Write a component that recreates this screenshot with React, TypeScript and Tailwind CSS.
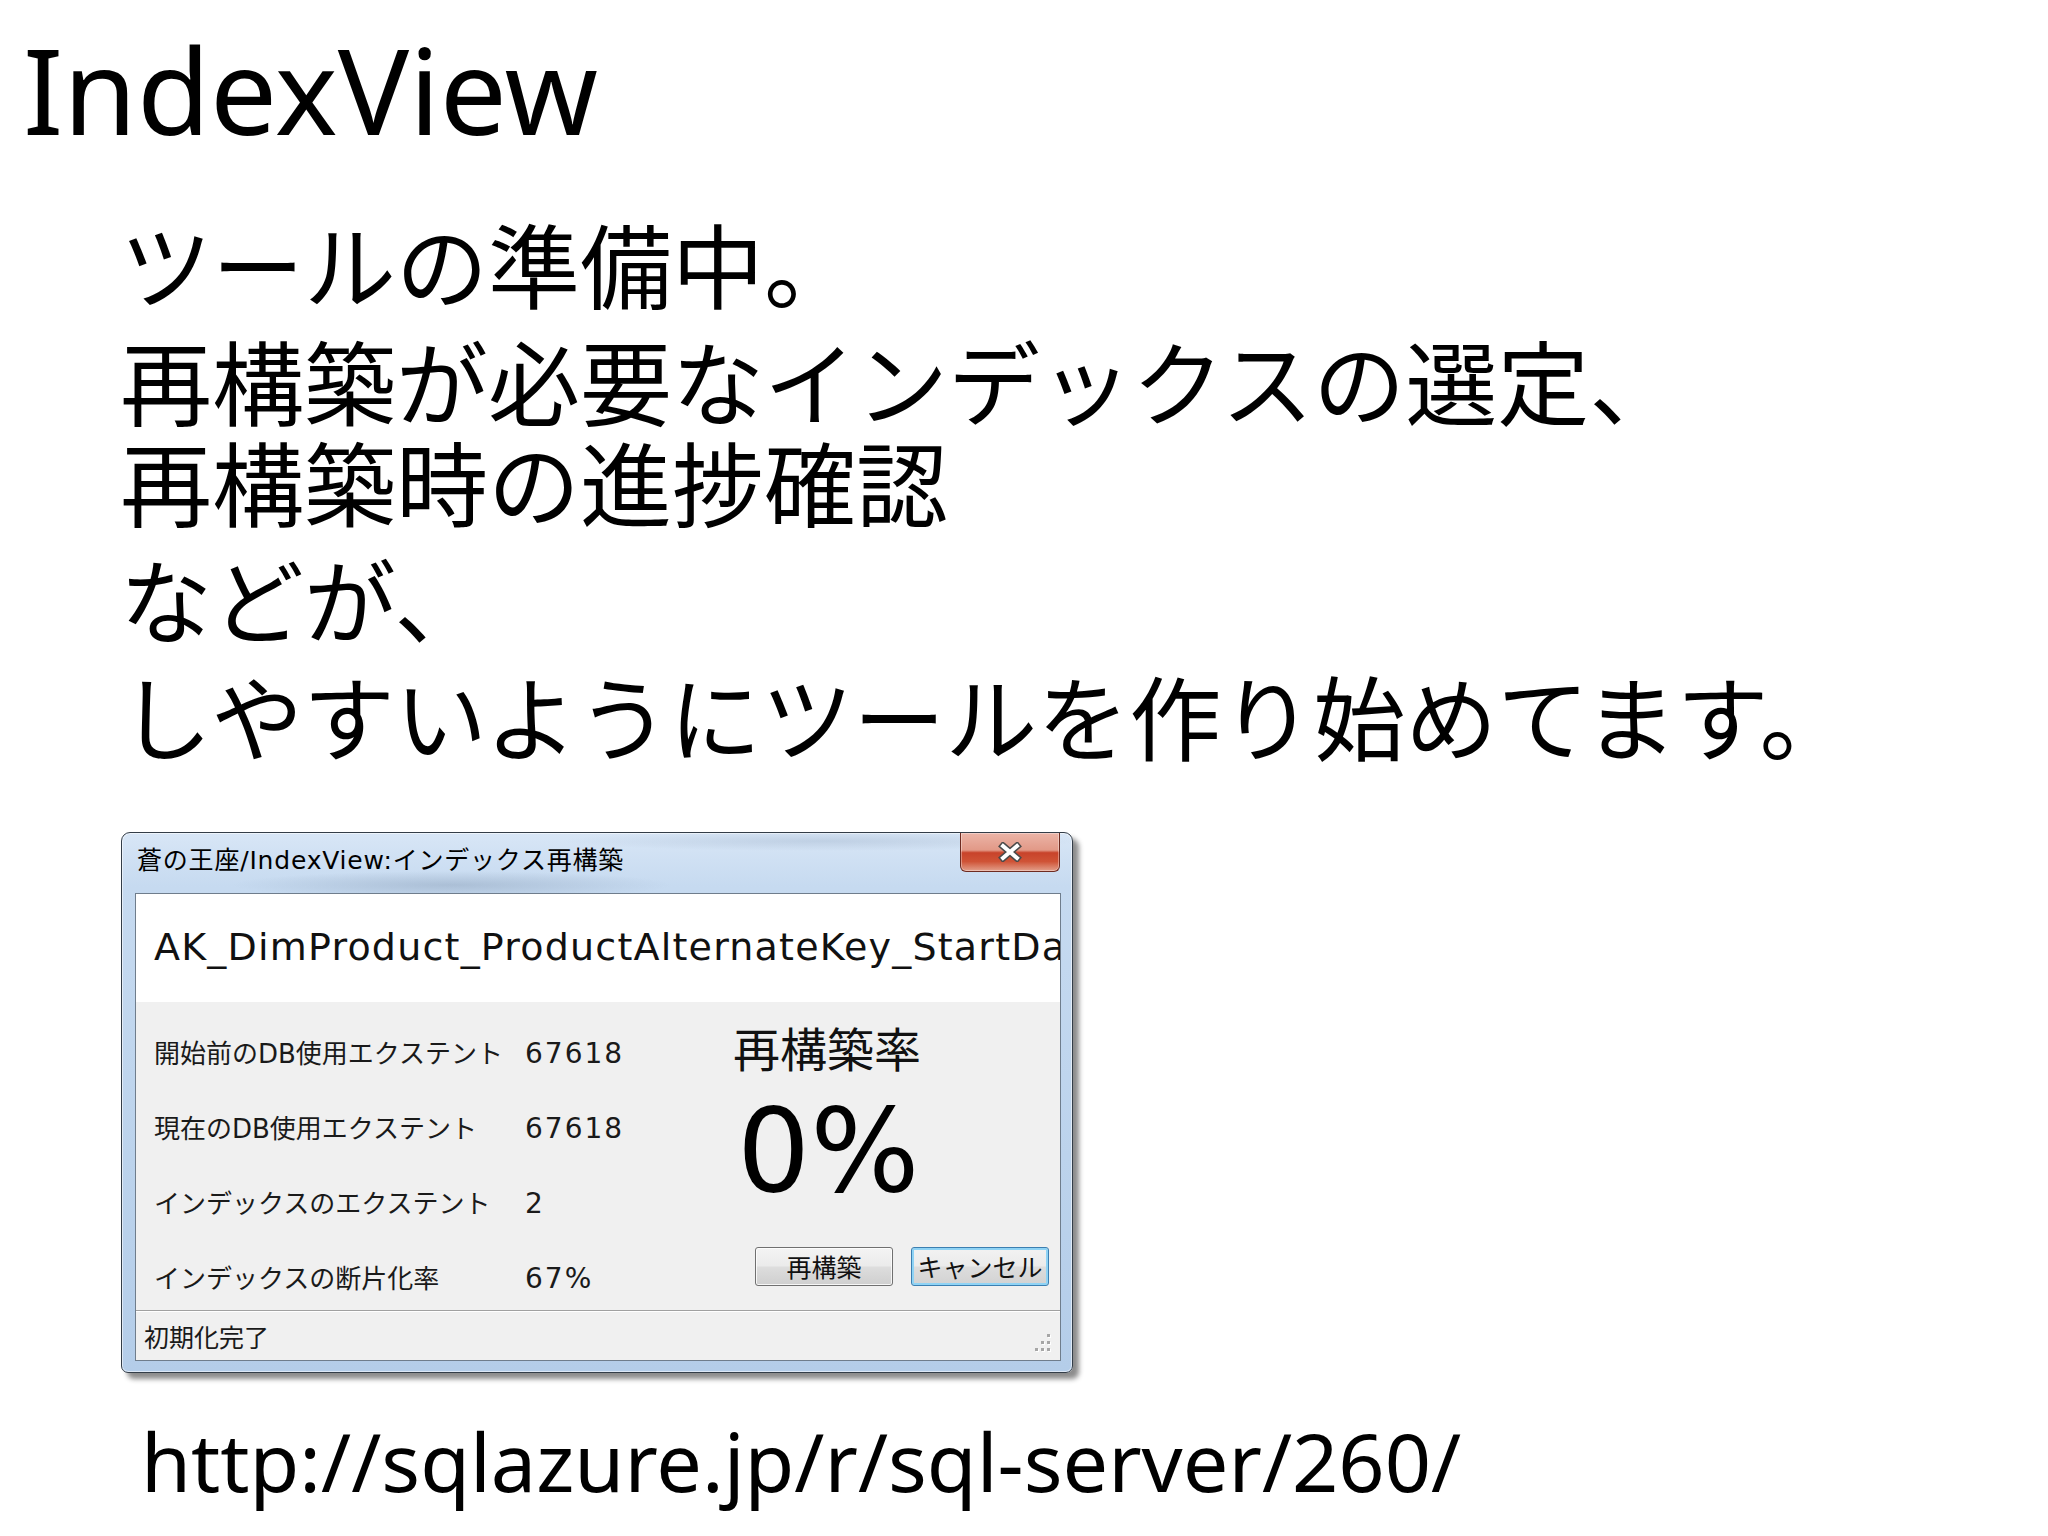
const jp = "font-['Noto_Sans_CJK_JP',sans-serif]";
const ui = "font-['DejaVu_Sans','Noto_Sans_CJK_JP',sans-serif]";

const rows = [
  { label: "開始前のDB使用エクステント", value: "67618" },
  { label: "現在のDB使用エクステント", value: "67618" },
  { label: "インデックスのエクステント", value: "2" },
  { label: "インデックスの断片化率", value: "67%" },
];

function CloseGlyph() {
  return (
    <svg width="28" height="20" viewBox="0 0 28 20">
      <path d="M7 4 L21 16 M21 4 L7 16" stroke="#4a4a4a" strokeWidth="7" strokeLinecap="square" />
      <path d="M7 4 L21 16 M21 4 L7 16" stroke="#ffffff" strokeWidth="4" strokeLinecap="square" />
    </svg>
  );
}

function Grip() {
  return (
    <svg width="22" height="22" viewBox="0 0 22 22">
      {[
        [16, 2],
        [10, 9],
        [16, 9],
        [4, 16],
        [10, 16],
        [16, 16],
      ].map(([x, y], i) => (
        <g key={i}>
          <rect x={x + 1} y={y + 1} width="3" height="3" fill="#ffffff" />
          <rect x={x} y={y} width="3" height="3" fill="#a6a6a6" />
        </g>
      ))}
    </svg>
  );
}

function Dialog() {
  return (
    <div className="flex w-[952px] flex-col rounded-t-[9px] rounded-b-[7px] border border-[#333d48] bg-[linear-gradient(180deg,#d8e6f6_0%,#c6daf0_10%,#bcd3ec_60%,#b4cde9_100%)] shadow-[6px_6px_5px_rgba(0,0,0,0.45),inset_0_0_0_1px_rgba(255,255,255,0.55)]">
      {/* title bar */}
      <div className="flex h-[60px] items-start justify-between bg-[radial-gradient(ellipse_220px_14px_at_330px_52px,rgba(120,140,165,0.35),transparent),radial-gradient(ellipse_260px_10px_at_700px_8px,rgba(150,170,195,0.35),transparent)] pl-[15px] pr-[12px]">
        <span className={`${ui} mt-[15px] text-[25px] leading-[25px] tracking-[0.8px] text-black`}>
          蒼の王座/IndexView:インデックス再構築
        </span>
        <div className="flex h-[39px] w-[100px] items-center justify-center rounded-b-[6px] border border-t-0 border-[#6e2b21] bg-[linear-gradient(180deg,#ebb4a7_0%,#e29987_45%,#c8432a_52%,#cf5336_75%,#e3a08b_100%)] shadow-[inset_0_0_0_1px_rgba(255,255,255,0.35)]">
          <CloseGlyph />
        </div>
      </div>

      {/* client area */}
      <div className="mb-[11px] ml-[13px] mr-[11px] flex flex-col border border-[#6f7d8c] bg-[#f0f0f0]">
        <div className="h-[108px] overflow-hidden whitespace-nowrap bg-white pl-[18px] pt-[34px] font-['DejaVu_Sans',sans-serif] text-[38px] leading-[38px] tracking-[1.2px] text-[#111]">
          AK_DimProduct_ProductAlternateKey_StartDate
        </div>

        <div className="flex h-[308px]">
          <div className="w-[597px] pl-[18px] pt-[14px]">
            {rows.map((r) => (
              <div key={r.label} className="grid h-[75px] grid-cols-[371px_1fr] items-center">
                <span className={`${ui} text-[26px] leading-[26px] text-[#1a1a1a]`}>{r.label}</span>
                <span className="font-['DejaVu_Sans',sans-serif] text-[28px] leading-[28px] tracking-[2px] text-[#1a1a1a]">
                  {r.value}
                </span>
              </div>
            ))}
          </div>

          <div className="flex flex-col pt-[21px]">
            <span className={`${jp} text-[47px] leading-[47px] text-[#111]`}>再構築率</span>
            <span className="ml-[4px] mt-[24px] font-['DejaVu_Sans',sans-serif] text-[115px] leading-[115px] text-black">
              0%
            </span>
            <div className="ml-[22px] mt-[38px] flex gap-[18px]">
              <div className={`${jp} flex h-[39px] w-[138px] items-center justify-center rounded-[3px] border border-[#707070] bg-[linear-gradient(180deg,#f4f4f4_0%,#ebebeb_48%,#dddddd_52%,#cfcfcf_100%)] text-[25px] leading-[25px] text-[#111] shadow-[inset_0_0_0_1px_rgba(255,255,255,0.8)]`}>
                再構築
              </div>
              <div className={`${jp} flex h-[39px] w-[138px] items-center justify-center rounded-[3px] border border-[#3c7fb1] bg-[linear-gradient(180deg,#f2f2f2_0%,#ebebeb_48%,#dddddd_52%,#d2d2d2_100%)] text-[25px] leading-[25px] text-[#111] shadow-[inset_0_0_0_2px_#8fd3f5]`}>
                キャンセル
              </div>
            </div>
          </div>
        </div>

        <div className="h-px bg-[#a0a0a0]" />
        <div className="h-px bg-white" />

        <div className="flex h-[48px] items-center justify-between pl-[8px] pr-[7px]">
          <span className={`${jp} text-[25px] leading-[25px] text-[#1a1a1a]`}>初期化完了</span>
          <div className="mb-[6px] self-end">
            <Grip />
          </div>
        </div>
      </div>
    </div>
  );
}

export default function App() {
  return (
    <div className="min-h-[1536px] w-[2048px] bg-white text-black">
      <h1 className="pl-[23px] pt-[30px] font-['Noto_Sans',sans-serif] text-[119px] font-normal leading-[119px]">
        IndexView
      </h1>

      <div className={`${jp} mt-[62px] pl-[120px] text-[92px] leading-[101px]`}>
        <p>ツールの準備中。</p>
        <p className="mt-[16px]">
          再構築が必要なインデックスの選定、
          <br />
          再構築時の進捗確認
        </p>
        <p className="mt-[16px]">などが、</p>
        <p className="mt-[16px]">しやすいようにツールを作り始めてます。</p>
      </div>

      <div className="ml-[121px] mt-[68px]">
        <Dialog />
      </div>

      <p className="mt-[47px] pl-[141px] font-['Noto_Sans',sans-serif] text-[81px] leading-[81px]">
        http://sqlazure.jp/r/sql-server/260/
      </p>
    </div>
  );
}
